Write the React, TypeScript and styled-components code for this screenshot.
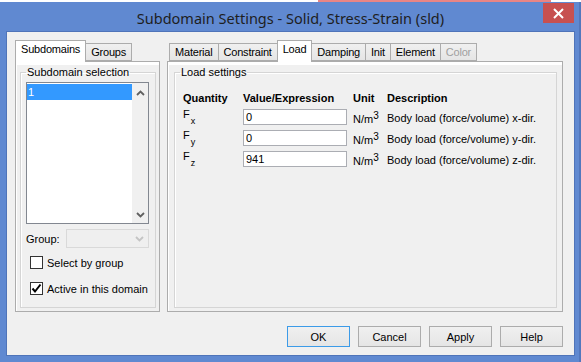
import styled, { createGlobalStyle } from "styled-components";

const GlobalStyle = createGlobalStyle`
  html, body {
    margin: 0;
    padding: 0;
    background: #ffffff;
    overflow: hidden;
  }
  body {
    font-family: "Liberation Sans", Arial, sans-serif;
    font-size: 11px;
    color: #000;
  }
`;

const rows = [
  { sub: "x", value: "0", dir: "x" },
  { sub: "y", value: "0", dir: "y" },
  { sub: "z", value: "941", dir: "z" },
];

const rightTabs = ["Material", "Constraint", "Load", "Damping", "Init", "Element", "Color"];

export default function App() {
  return (
    <>
      <GlobalStyle />
      <Screen>
        <BackStrip />
        <Window>
          <TitleBar>
            <span />
            <Title>Subdomain Settings - Solid, Stress-Strain (sld)</Title>
            <CloseButton>
              <svg width="11" height="11" viewBox="0 0 11 11">
                <path d="M1 1 L10 10 M10 1 L1 10" stroke="#fff" strokeWidth="2" />
              </svg>
            </CloseButton>
          </TitleBar>

          <Client>
            <Panels>
              <TabControl $width={145}>
                <TabRow $offset={0}>
                  <Tab $active>Subdomains</Tab>
                  <Tab>Groups</Tab>
                </TabRow>
                <TabPanel>
                  <GroupBox $margin="4px 3px 3px 4px" $padding="3px 6px 0 5px" $legendShift={0}>
                    <legend>Subdomain selection</legend>
                    <ListBox>
                      <ListItems>
                        <ListItem $selected>1</ListItem>
                      </ListItems>
                      <ScrollBar>
                        <Chevron dir="up" />
                        <Chevron dir="down" />
                      </ScrollBar>
                    </ListBox>
                    <GroupRow>
                      <span>Group:</span>
                      <ComboBox>
                        <Chevron dir="down" color="#c4c4c4" />
                      </ComboBox>
                    </GroupRow>
                    <CheckRow>
                      <CheckBox />
                      <span>Select by group</span>
                    </CheckRow>
                    <CheckRow>
                      <CheckBox>
                        <svg width="11" height="11" viewBox="0 0 11 11">
                          <path d="M1.5 5.5 L4 8.5 L9.5 1.5" stroke="#000" strokeWidth="2" fill="none" />
                        </svg>
                      </CheckBox>
                      <span>Active in this domain</span>
                    </CheckRow>
                  </GroupBox>
                </TabPanel>
              </TabControl>

              <TabControl $width={396}>
                <TabRow $offset={2}>
                  {rightTabs.map((t) => (
                    <Tab key={t} $active={t === "Load"} $disabled={t === "Color"}>
                      {t}
                    </Tab>
                  ))}
                </TabRow>
                <TabPanel>
                  <GroupBox $margin="4px 5px 3px 6px" $padding="9px 8px 0 8px" $legendShift={-3}>
                    <legend>Load settings</legend>
                    <LoadTable>
                      <HeadCell>Quantity</HeadCell>
                      <HeadCell>Value/Expression</HeadCell>
                      <HeadCell>Unit</HeadCell>
                      <HeadCell>Description</HeadCell>
                      {rows.map((r) => (
                        <Row key={r.sub}>
                          <Quantity>
                            F<sub>{r.sub}</sub>
                          </Quantity>
                          <ValueInput defaultValue={r.value} />
                          <Unit>
                            N/m<sup>3</sup>
                          </Unit>
                          <Desc>Body load (force/volume) {r.dir}-dir.</Desc>
                        </Row>
                      ))}
                    </LoadTable>
                  </GroupBox>
                </TabPanel>
              </TabControl>
            </Panels>

            <ButtonRow>
              <DialogButton $default>OK</DialogButton>
              <DialogButton>Cancel</DialogButton>
              <DialogButton>Apply</DialogButton>
              <DialogButton>Help</DialogButton>
            </ButtonRow>
          </Client>
        </Window>
      </Screen>
    </>
  );
}

const Chevron = ({ dir, color = "#606060" }: { dir: "up" | "down"; color?: string }) => (
  <svg width="9" height="6" viewBox="0 0 9 6">
    <path
      d={dir === "up" ? "M1 5 L4.5 1.5 L8 5" : "M1 1 L4.5 4.5 L8 1"}
      stroke={color}
      strokeWidth="1.8"
      fill="none"
    />
  </svg>
);

const Screen = styled.div`
  width: 581px;
  height: 362px;
  display: flex;
  flex-direction: column;
`;

const BackStrip = styled.div`
  height: 2px;
  flex-shrink: 0;
  background: linear-gradient(
    90deg,
    #ffffff 318px,
    #e98585 318px,
    #e98585 551px,
    #ffffff 551px
  );
`;

const Window = styled.div`
  flex: 1;
  background: #6089d1;
  display: flex;
  flex-direction: column;
  border-right: 2px solid #5277bd;
`;

const TitleBar = styled.div`
  height: 30px;
  display: grid;
  grid-template-columns: 1fr auto 1fr;
  align-items: start;
`;

const Title = styled.div`
  font-family: "Noto Sans", "Open Sans", sans-serif;
  font-size: 14.5px;
  color: #1e1e1e;
  line-height: 20px;
  padding-top: 6px;
  padding-left: 2px;
`;

const CloseButton = styled.div`
  justify-self: end;
  width: 31px;
  height: 20px;
  margin: 1px 5px 0 0;
  background: #c75050;
  display: flex;
  align-items: center;
  justify-content: center;
`;

const Client = styled.div`
  margin: 0 5px 0 7px;
  height: 323px;
  box-sizing: border-box;
  background: #f0f0f0;
  box-shadow: 0 0 0 1px #4f74b9;
  padding: 8px 11px 8px 8px;
  display: flex;
  flex-direction: column;
`;

const Panels = styled.div`
  display: flex;
  gap: 7px;
  height: 273px;
`;

const TabControl = styled.div<{ $width: number }>`
  width: ${(p) => p.$width}px;
  display: flex;
  flex-direction: column;
`;

const TabRow = styled.div<{ $offset: number }>`
  height: 21px;
  display: flex;
  align-items: flex-end;
  padding-left: ${(p) => p.$offset}px;
`;

const Tab = styled.div<{ $active?: boolean; $disabled?: boolean }>`
  height: ${(p) => (p.$active ? 22 : 18)}px;
  margin-bottom: ${(p) => (p.$active ? -1 : 0)}px;
  box-sizing: border-box;
  padding: 2px 5px 0;
  border: 1px solid #acacac;
  border-bottom: ${(p) => (p.$active ? "none" : "1px solid #acacac")};
  margin-right: -1px;
  background: ${(p) => (p.$active ? "#ffffff" : "linear-gradient(#f0f0f0, #e5e5e5)")};
  color: ${(p) => (p.$disabled ? "#a0a0a0" : "#000")};
  position: relative;
  z-index: ${(p) => (p.$active ? 2 : 1)};
  line-height: 13px;
  white-space: nowrap;
  letter-spacing: -0.2px;
`;

const TabPanel = styled.div`
  flex: 1;
  border: 1px solid #acacac;
  background: #f0f0f0;
  box-shadow: inset 1px 3px 0 #ffffff;
  display: flex;
  flex-direction: column;
`;

const GroupBox = styled.fieldset<{ $margin: string; $padding: string; $legendShift: number }>`
  flex: 1;
  margin: ${(p) => p.$margin};
  padding: ${(p) => p.$padding};
  border: 1px solid #d5d5d5;
  box-shadow: inset 1px 1px 0 #ffffff;
  min-width: 0;
  display: flex;
  flex-direction: column;

  legend {
    padding: 0 1px;
    margin-left: ${(p) => p.$legendShift}px;
    line-height: 13px;
  }
`;

const ListBox = styled.div`
  height: 142px;
  box-sizing: border-box;
  border: 1px solid #828790;
  background: #ffffff;
  display: flex;
`;

const ListItems = styled.div`
  flex: 1;
  padding-top: 1px;
`;

const ListItem = styled.div<{ $selected?: boolean }>`
  height: 16px;
  line-height: 16px;
  padding-left: 1px;
  background: ${(p) => (p.$selected ? "#3399ff" : "transparent")};
  color: ${(p) => (p.$selected ? "#ffffff" : "#000")};
`;

const ScrollBar = styled.div`
  width: 16px;
  background: #f0f0f0;
  display: flex;
  flex-direction: column;
  justify-content: space-between;
  align-items: center;
  padding: 7px 0 5px;
`;

const GroupRow = styled.div`
  display: flex;
  align-items: center;
  justify-content: space-between;
  margin-top: 5px;
  height: 19px;
`;

const ComboBox = styled.div`
  width: 83px;
  height: 19px;
  box-sizing: border-box;
  border: 1px solid #d9d9d9;
  background: #efefef;
  display: flex;
  align-items: center;
  justify-content: flex-end;
  padding-right: 4px;
`;

const CheckRow = styled.div`
  display: flex;
  align-items: center;
  gap: 4px;
  padding-left: 4px;
  margin-top: 8px;
  height: 13px;

  & + & {
    margin-top: 13px;
  }
`;

const CheckBox = styled.div`
  width: 13px;
  height: 13px;
  box-sizing: border-box;
  border: 1px solid #333333;
  background: #ffffff;
  display: flex;
  align-items: center;
  justify-content: center;
`;

const LoadTable = styled.div`
  display: grid;
  grid-template-columns: 60px 110px 34px 1fr;
  grid-auto-rows: 16px;
  row-gap: 5px;
  align-items: center;
`;

const HeadCell = styled.div`
  font-weight: bold;
  margin-bottom: -3px;
`;

const Row = styled.div`
  display: contents;
`;

const Quantity = styled.div`
  align-self: start;
  line-height: 11px;
  margin-top: 0;

  sub {
    font-size: 9px;
    vertical-align: -6px;
    margin-left: 1px;
  }
`;

const ValueInput = styled.input`
  width: 104px;
  height: 16px;
  box-sizing: border-box;
  border: 1px solid #abadb3;
  font-family: "Liberation Sans", Arial, sans-serif;
  font-size: 11px;
  padding: 0 2px;
  margin: 0;
  outline: none;
`;

const Unit = styled.div`
  padding-top: 3px;

  sup {
    font-size: 10px;
    vertical-align: 4px;
    line-height: 0;
  }
`;

const Desc = styled.div`
  padding-top: 1px;
`;

const ButtonRow = styled.div`
  display: flex;
  justify-content: flex-end;
  gap: 8px;
  margin-top: 14px;
`;

const DialogButton = styled.button<{ $default?: boolean }>`
  width: 63px;
  height: 21px;
  box-sizing: border-box;
  border: 1px solid ${(p) => (p.$default ? "#3c9be8" : "#acacac")};
  background: linear-gradient(#f0f0f0, #e5e5e5);
  font-family: "Liberation Sans", Arial, sans-serif;
  font-size: 11px;
  color: #000;
  padding: 0;
`;
